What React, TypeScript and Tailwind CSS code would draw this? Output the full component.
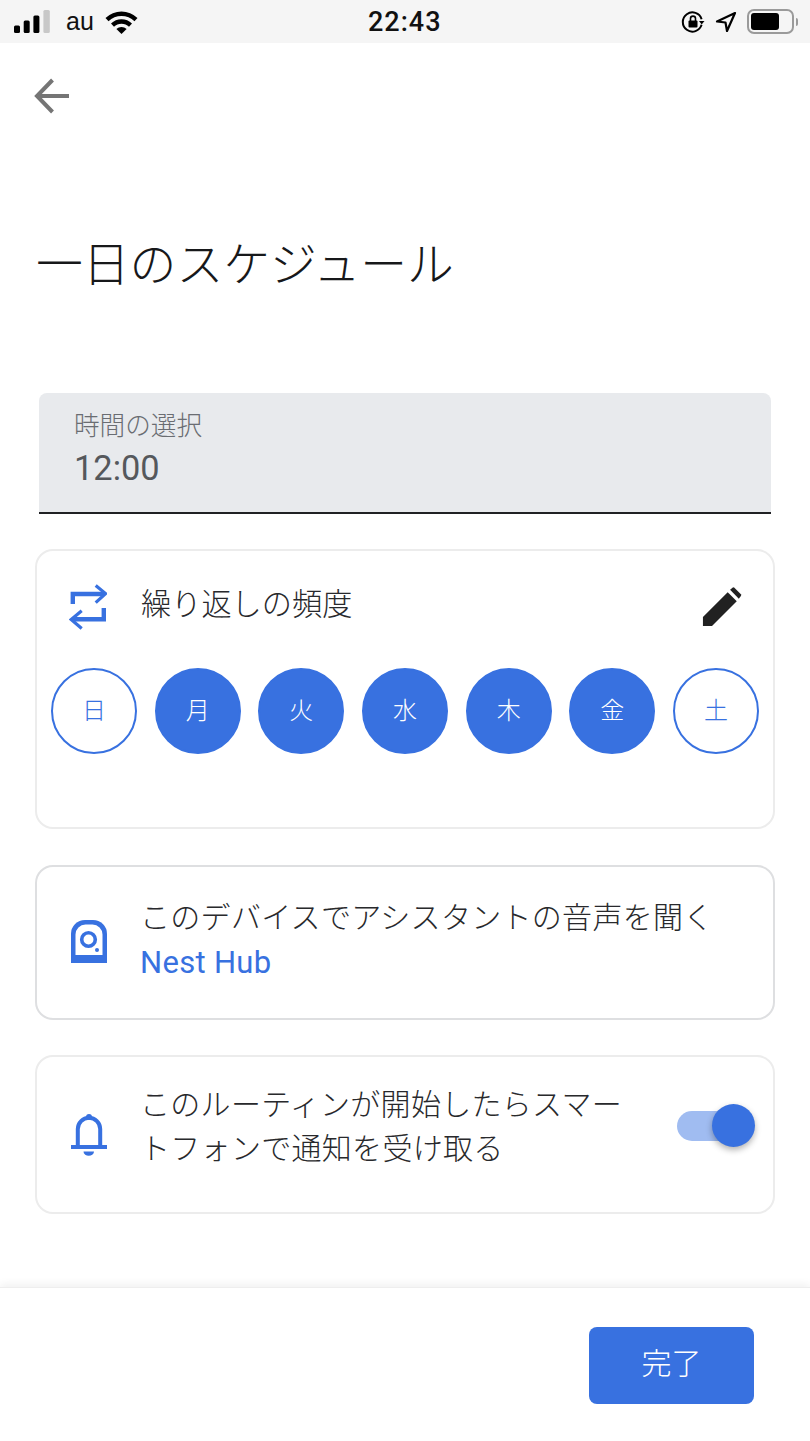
import React from "react";

const cjk = "font-['Roboto','Noto_Sans_CJK_JP',sans-serif]";

function SignalBars() {
  return (
    <svg width="37" height="24" viewBox="0 0 37 24" className="block">
      <rect x="0" y="15.5" width="6" height="7.5" rx="1.5" fill="#000" />
      <rect x="9.7" y="10.5" width="6" height="12.5" rx="1.5" fill="#000" />
      <rect x="19.4" y="5.5" width="6" height="17.5" rx="1.5" fill="#000" />
      <rect x="29.4" y="0" width="6.4" height="23" rx="1.5" fill="#c8c8c8" />
    </svg>
  );
}

function Wifi() {
  return (
    <svg width="33" height="24" viewBox="0 0 33 24" className="block">
      <path d="M0.5 8 A23 23 0 0 1 32.5 8 L29.5 11.2 A18.6 18.6 0 0 0 3.5 11.2 Z" fill="#000" />
      <path d="M6 13.6 A15 15 0 0 1 27 13.6 L24 16.8 A10.6 10.6 0 0 0 9 16.8 Z" fill="#000" />
      <path d="M11.4 19 A7.4 7.4 0 0 1 21.6 19 L16.5 24 Z" fill="#000" />
    </svg>
  );
}

function RotationLock() {
  return (
    <svg width="24" height="24" viewBox="0 0 24 24" fill="none" className="block">
      <path d="M20.6 9.2 A9.6 9.6 0 1 0 20.6 14.8" stroke="#000" strokeWidth="2" />
      <path d="M18 11 L23.5 11 L20.7 14.5 Z" fill="#000" />
      <rect x="7.5" y="10.5" width="9" height="7" rx="1" fill="#000" />
      <path d="M9.5 11 V8.6 A2.5 2.5 0 0 1 14.5 8.6 V11" stroke="#000" strokeWidth="1.6" />
    </svg>
  );
}

function LocationArrow() {
  return (
    <svg width="22" height="22" viewBox="0 0 22 22" fill="none" className="block">
      <path d="M20 2 L2 10.5 L10.5 11.5 L12 20 Z" stroke="#000" strokeWidth="2.2" strokeLinejoin="round" />
    </svg>
  );
}

function Battery() {
  return (
    <div className="flex items-center gap-[2px]">
      <div className="w-[47px] h-[25px] rounded-[7px] border-2 border-[#9a9a9a] p-[2px]">
        <div className="w-[28px] h-full rounded-[3px] bg-black" />
      </div>
      <div className="w-[2px] h-[8px] rounded-r-sm bg-[#9a9a9a]" />
    </div>
  );
}

function StatusBar() {
  return (
    <div className={`relative h-[43px] bg-[#f5f5f5] flex items-center justify-between pl-[14px] pr-[12px] ${cjk}`}>
      <div className="flex items-center">
        <SignalBars />
        <span className="ml-[15px] text-[25px] leading-none text-[#111] font-['Liberation_Sans',sans-serif]">au</span>
        <span className="ml-[11px]"><Wifi /></span>
      </div>
      <span className="absolute left-[368px] top-[7px] text-[27px] leading-[30px] font-medium tracking-[1px] text-[#111] font-['Roboto',sans-serif]">
        22:43
      </span>
      <div className="flex items-center gap-[10px]">
        <RotationLock />
        <LocationArrow />
        <Battery />
      </div>
    </div>
  );
}

function BackArrow() {
  return (
    <svg width="36" height="36" viewBox="0 0 36 36" fill="none" className="block">
      <path d="M35 18 H4 M18.5 2 L3 18 L18.5 34" stroke="#757575" strokeWidth="4" />
    </svg>
  );
}

function RepeatIcon() {
  return (
    <svg width="38" height="46" viewBox="0 0 38 46" fill="none" className="block">
      <path d="M3.8 20 V10 H35" stroke="#3871e0" strokeWidth="4.4" />
      <path d="M26.7 1.5 L36.5 9.6 L26.7 18.7" stroke="#3871e0" strokeWidth="3.2" />
      <path d="M34.8 24 V35.3 H3" stroke="#3871e0" strokeWidth="4.4" />
      <path d="M12.7 26.8 L2.2 35.5 L12.7 44.5" stroke="#3871e0" strokeWidth="3.2" />
    </svg>
  );
}

function PencilIcon() {
  return (
    <svg width="40" height="40" viewBox="0 0 42 42" className="block">
      <path d="M1 41 V31.5 L27 5.5 L36.5 15 L10.5 41 Z" fill="#212121" />
      <path d="M29.5 3 L32 0.7 Q33 0 34 0.7 L40.8 7.5 Q41.5 8.5 40.8 9.5 L38.7 12.3 Z" fill="#212121" />
    </svg>
  );
}

function SpeakerIcon() {
  return (
    <svg width="36" height="43" viewBox="0 0 36 43" className="block" fill="none">
      <path d="M0 43 V14 A14 14 0 0 1 14 0 H22 A14 14 0 0 1 36 14 V43 Z" fill="#3871e0" />
      <path d="M4.5 35 V14.5 A10 10 0 0 1 14.5 4.5 H21.5 A10 10 0 0 1 31.5 14.5 V35 Z" fill="#fff" />
      <circle cx="17.5" cy="19.5" r="6.8" stroke="#3871e0" strokeWidth="3.6" />
      <circle cx="26" cy="30" r="2" fill="#3871e0" />
    </svg>
  );
}

function BellIcon() {
  return (
    <svg width="36" height="44" viewBox="0 0 36 44" className="block" fill="none">
      <circle cx="18" cy="3" r="3" fill="#3871e0" />
      <path d="M6.8 32 V15 A11.2 11.2 0 0 1 29.2 15 V32" stroke="#3871e0" strokeWidth="4" />
      <rect x="0" y="31" width="36" height="4" fill="#3871e0" />
      <path d="M12.5 37.5 H23 A5.2 4.2 0 0 1 12.5 37.5 Z" fill="#3871e0" />
    </svg>
  );
}

function DayBubble({ label, active }: { label: string; active: boolean }) {
  return (
    <div
      className={`w-[86px] h-[86px] rounded-full flex items-center justify-center text-[24px] font-light border-2 border-[#3871e0] ${
        active ? "bg-[#3871e0] text-white" : "bg-white text-[#3871e0]"
      }`}
    >
      {label}
    </div>
  );
}

const days = [
  { label: "日", active: false },
  { label: "月", active: true },
  { label: "火", active: true },
  { label: "水", active: true },
  { label: "木", active: true },
  { label: "金", active: true },
  { label: "土", active: false },
];

export default function App() {
  return (
    <div className={`relative w-[810px] h-[1441px] bg-white overflow-hidden ${cjk}`}>
      <StatusBar />

      <div className="pl-[34px] pt-[35px]">
        <BackArrow />
      </div>

      <h1 className="ml-[36px] mt-[121px] text-[46.8px] leading-[60px] font-light text-[#17181a]">
        一日のスケジュール
      </h1>

      <div className="mx-[39px] mt-[98px] h-[121px] bg-[#e8eaed] rounded-t-[8px] border-b-2 border-[#202124] pl-[35px] pt-[15px]">
        <div className="text-[25.6px] leading-[36px] font-light text-[#6a6d72]">時間の選択</div>
        <div className="mt-[3px] text-[34.4px] leading-[42px] text-[#55585c]">12:00</div>
      </div>

      <section className="mx-[35px] mt-[35px] h-[280px] rounded-[18px] border-2 border-[#ececec]">
        <div className="flex items-center pl-[32px] pr-[31px] pt-[33px]">
          <RepeatIcon />
          <span className="ml-[34px] text-[30.2px] leading-[44px] font-light text-[#28292c] flex-1 -mt-[4px]">繰り返しの頻度</span>
          <PencilIcon />
        </div>
        <div className="flex justify-between pl-[14px] pr-[14px] mt-[38px]">
          {days.map((d) => (
            <DayBubble key={d.label} label={d.label} active={d.active} />
          ))}
        </div>
      </section>

      <section className="mx-[35px] mt-[36px] h-[155px] rounded-[18px] border-2 border-[#dedfe1] flex items-center pl-[34px]">
        <div className="-mt-[2px]"><SpeakerIcon /></div>
        <div className="ml-[33px] -mt-[5px]">
          <div className="text-[30px] leading-[44px] tracking-[0.3px] font-light text-[#28292c]">このデバイスでアシスタントの音声を聞く</div>
          <div className="text-[31px] leading-[44px] tracking-[0.3px] font-normal text-[#3871e0] pt-[1px]">Nest Hub</div>
        </div>
      </section>

      <section className="mx-[35px] mt-[35px] h-[159px] rounded-[18px] border-2 border-[#ececec] flex items-center pl-[34px] relative">
        <div className="mt-[3px]"><BellIcon /></div>
        <div className="ml-[33px] w-[490px] -mt-[15px] text-[30px] leading-[44px] tracking-[0.3px] font-light text-[#28292c]">
          このルーティンが開始したらスマートフォンで通知を受け取る
        </div>
        <div className="absolute left-[640px] top-[54px] w-[60px] h-[30px] rounded-full bg-[#a0bcf1]" />
        <div className="absolute left-[675px] top-[47px] w-[43px] h-[43px] rounded-full bg-[#3871e0] shadow-[0_3px_6px_rgba(0,0,0,0.3)]" />
      </section>

      <footer className="absolute left-0 right-0 bottom-0 h-[154px] bg-white border-t border-[#eeeeee] shadow-[0_-3px_8px_rgba(0,0,0,0.06)] flex justify-end items-start pt-[39px] pr-[56px]">
        <button className="w-[165px] h-[77px] rounded-[8px] bg-[#3871e0] text-[30px] font-light text-white flex items-center justify-center pb-[4px]">
          完了
        </button>
      </footer>
    </div>
  );
}
